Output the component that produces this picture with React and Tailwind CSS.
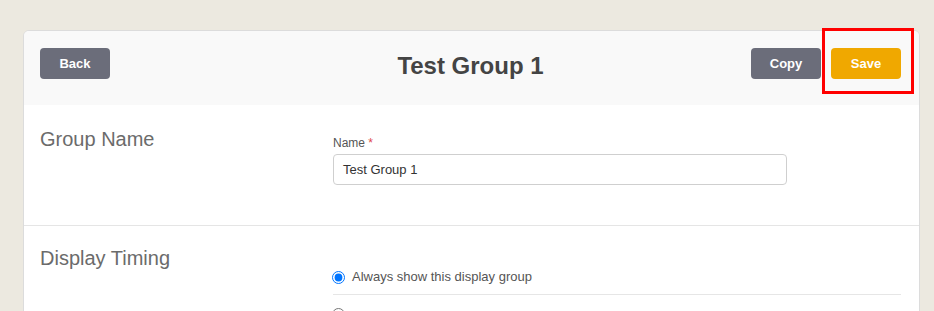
import React from "react";

export default function App() {
  const font = { fontFamily: '"Liberation Sans", Arial, sans-serif' };
  return (
    <div className="relative w-[934px] h-[311px] overflow-hidden bg-[#ece9e0] pt-[30px]" style={font}>
      <div className="ml-[23px] w-[897px] rounded-t-[6px] border border-[#dcdcdc] bg-white overflow-hidden">
        {/* Header */}
        <div className="flex items-start h-[74px] bg-[#f9f9f9] pt-[17px] pl-[16px] pr-[18px]">
          <div className="flex-1 flex">
            <button className="w-[70px] h-[31px] rounded-[4px] bg-[#6b6d7a] text-white text-[13px] font-bold">Back</button>
          </div>
          <h1 className="mt-[6px] text-[24px] leading-[24px] font-bold text-[#444]">Test Group 1</h1>
          <div className="flex-1 flex justify-end gap-[10px]">
            <button className="w-[70px] h-[31px] rounded-[4px] bg-[#6b6d7a] text-white text-[13px] font-bold">Copy</button>
            <button className="w-[70px] h-[31px] rounded-[4px] bg-[#f0a800] text-white text-[13px] font-bold">Save</button>
          </div>
        </div>

        {/* Group Name section */}
        <div className="flex border-b border-[#e5e5e5] pl-[16px] pr-[18px] pt-[22px] pb-[40px]">
          <div className="w-[293px] text-[20px] leading-[24px] text-[#6b6b6b]">Group Name</div>
          <div className="flex-1 pt-[8px]">
            <label className="block text-[12px] leading-[16px] text-[#555]">
              Name <span className="text-[#e0474c]">*</span>
            </label>
            <div className="mt-[3px] w-[454px] h-[31px] rounded-[4px] border border-[#cfcfcf] bg-white flex items-center pl-[9px] text-[13px] text-[#333]">
              Test Group 1
            </div>
          </div>
        </div>

        {/* Display Timing section */}
        <div className="flex pl-[16px] pr-[18px] pt-[20px] pb-[20px]">
          <div className="w-[293px] text-[20px] leading-[24px] text-[#6b6b6b]">Display Timing</div>
          <div className="flex-1 pt-[13px]">
            <div className="flex items-center gap-[7px] pt-[9px] pb-[8px] border-b border-[#e6e6e6]">
              <input type="radio" name="timing" checked readOnly className="m-0 ml-[-1px] w-[13px] h-[13px]" />
              <span className="text-[13px] leading-[18px] text-[#555]">Always show this display group</span>
            </div>
            <div className="flex items-center gap-[7px] pt-[11px] pb-[9px] h-[38px] border-b border-[#e6e6e6]">
              <input type="radio" name="timing" readOnly className="m-0 ml-[-1px] w-[13px] h-[13px]" />
            </div>
          </div>
        </div>
      </div>

      {/* Red annotation box */}
      <div className="absolute left-[822px] top-[28px] w-[92px] h-[66px] border-[3px] border-[#ff0000]" />
    </div>
  );
}
